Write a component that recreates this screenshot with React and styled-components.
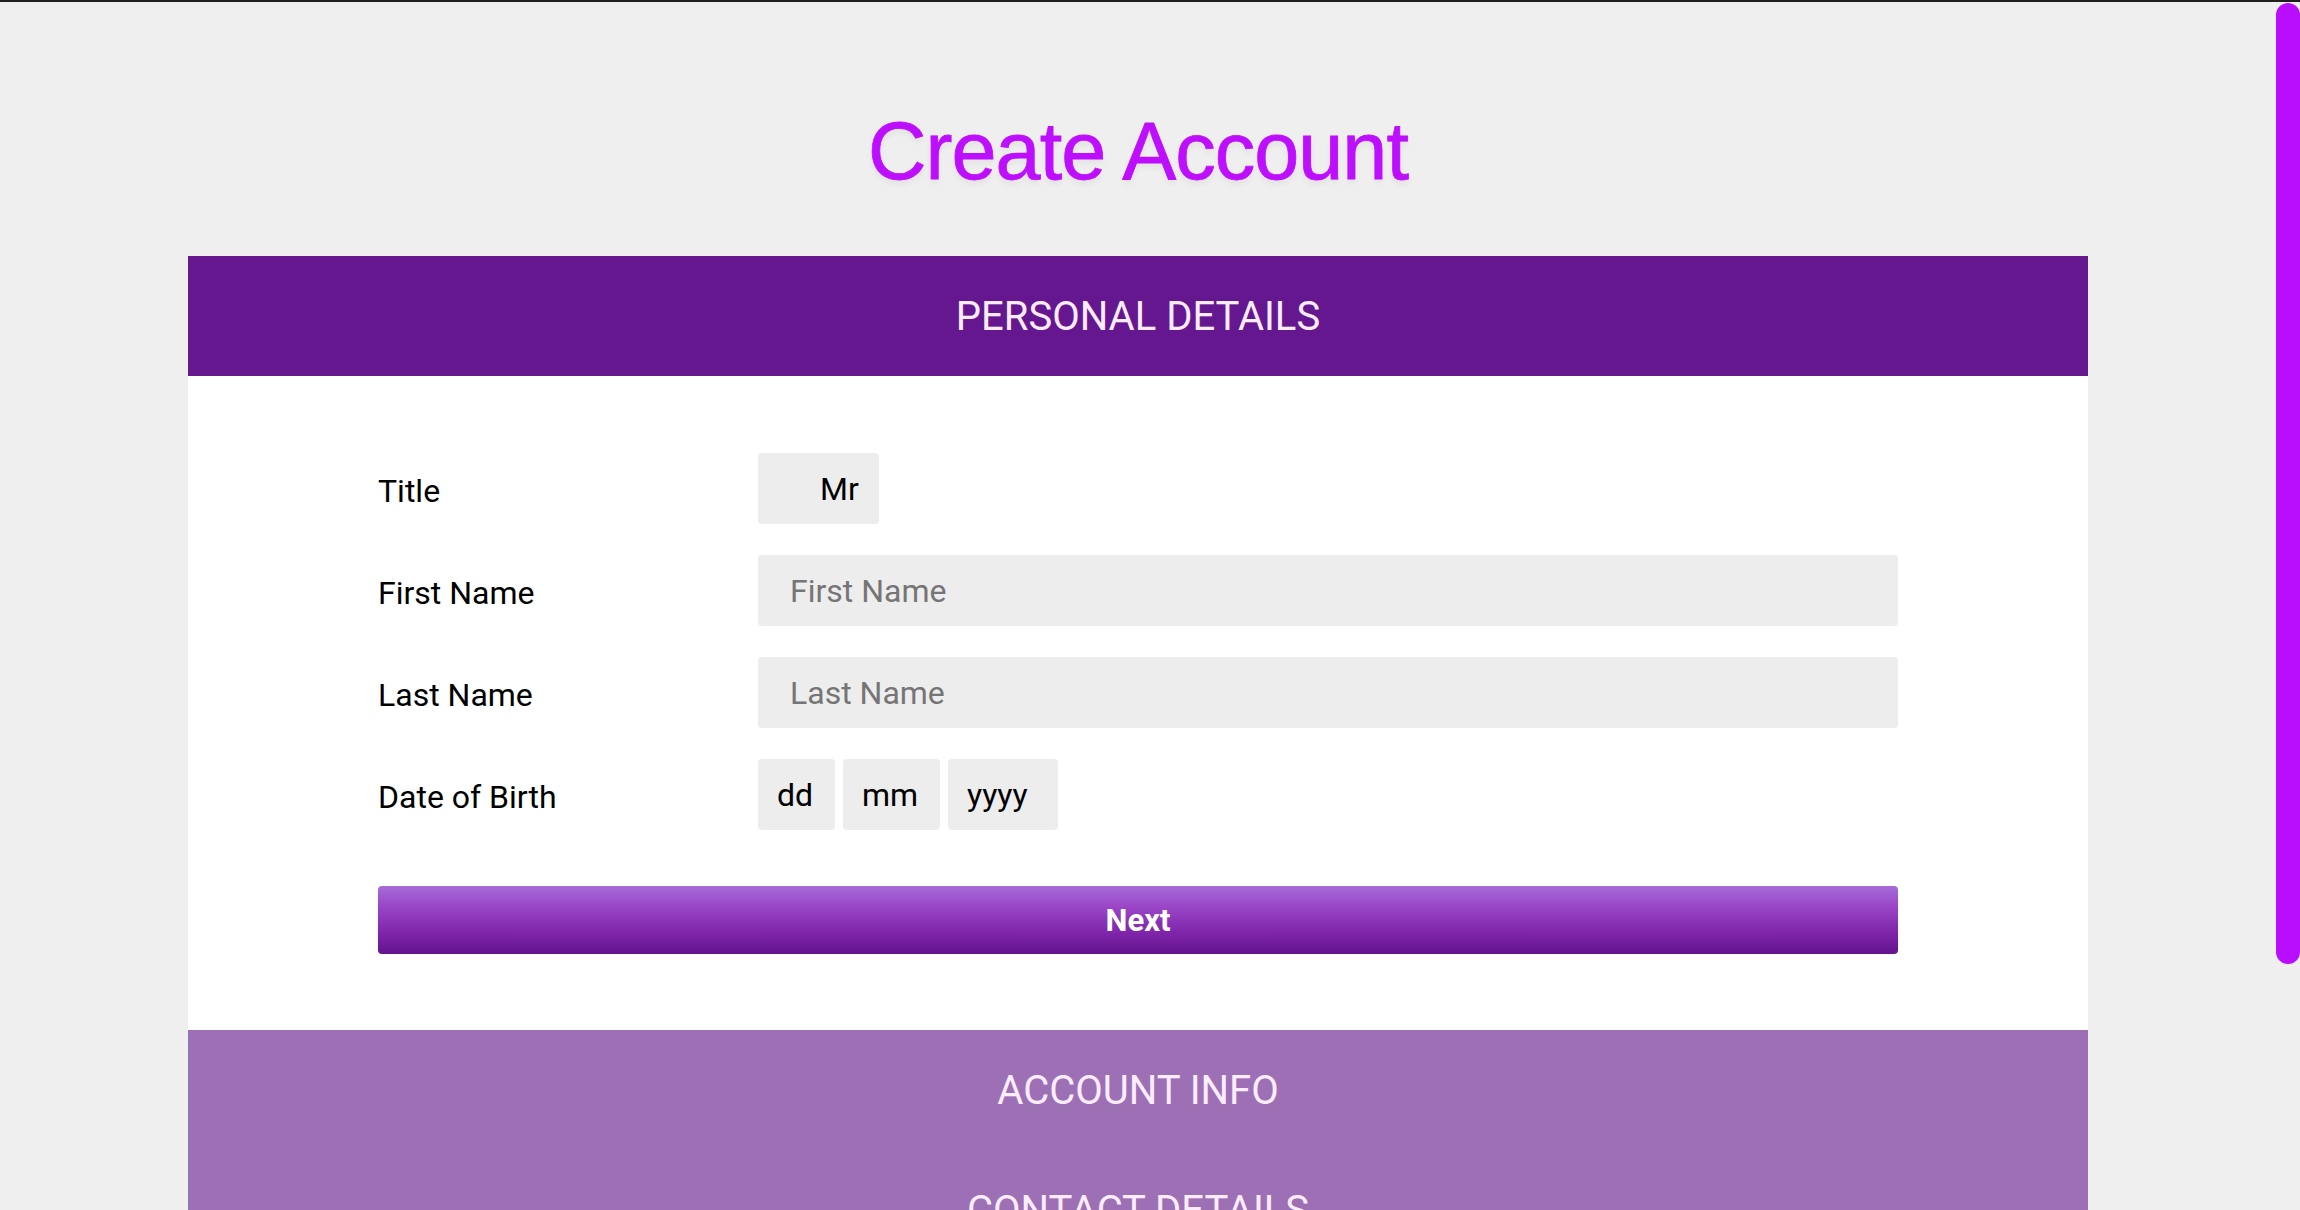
import React from 'react'
import styled, {createGlobalStyle} from 'styled-components'

const GlobalStyle = createGlobalStyle`
html {
    background: #efefef;
    scrollbar-width: none;
}
body {
    margin: 0;
    background: #efefef;
    font-family: Roboto, "Liberation Sans", sans-serif;
}
`;

const sections = ['Account Info', 'Contact Details']

export default function App() {
    return (
        <>
            <GlobalStyle />
            <TopEdge />
            <ScrollTrack>
                <ScrollThumb />
            </ScrollTrack>
            <Page>
                <Title>Create Account</Title>
                <Panel>
                    <SectionHeader $active>Personal Details</SectionHeader>
                    <SectionBody>
                        <Row>
                            <Label htmlFor='title'>Title</Label>
                            <Field>
                                <Picker id='title' $w={121} $pl={62} defaultValue='Mr'>
                                    <option>Mr</option>
                                    <option>Mrs</option>
                                    <option>Ms</option>
                                </Picker>
                            </Field>
                        </Row>
                        <Row>
                            <Label htmlFor='first'>First Name</Label>
                            <TextInput id='first' placeholder='First Name' />
                        </Row>
                        <Row>
                            <Label htmlFor='last'>Last Name</Label>
                            <TextInput id='last' placeholder='Last Name' />
                        </Row>
                        <Row>
                            <Label htmlFor='dob'>Date of Birth</Label>
                            <Field>
                                <Picker id='dob' $w={77}><option>dd</option></Picker>
                                <Picker $w={97}><option>mm</option></Picker>
                                <Picker $w={110} $pr={29}><option>yyyy</option></Picker>
                            </Field>
                        </Row>
                        <NextButton type='button'>Next</NextButton>
                    </SectionBody>
                    {sections.map(s => (
                        <SectionHeader key={s}>{s}</SectionHeader>
                    ))}
                </Panel>
            </Page>
        </>
    )
}

const TopEdge = styled.div`
position: fixed;
top: 0;
left: 0;
right: 0;
height: 2px;
background: #1f1f1f;
z-index: 5;
`;

// the page is scrolled to the top, thumb drawn over the right edge
const ScrollTrack = styled.div`
position: fixed;
top: 0;
right: 0;
bottom: 0;
width: 24px;
padding-top: 3px;
box-sizing: border-box;
background: #efefef;
z-index: 4;
`;

const ScrollThumb = styled.div`
height: 961px;
border-radius: 12px;
background: #b90dfe;
`;

const Page = styled.main`
display: flex;
flex-direction: column;
align-items: center;
padding: 111px 24px 260px 0;
`;

const Title = styled.h1`
margin: 0 0 64px;
font: 400 81px/1 "Liberation Sans", Arial, sans-serif;
letter-spacing: -1px;
color: #bd0efd;
-webkit-text-stroke: 0.8px #bd0efd;
text-shadow: 0 4px 6px rgba(0,0,0,0.06);
`;

const Panel = styled.section`
width: 1900px;
`;

const SectionHeader = styled.h2`
margin: 0;
height: 120px;
display: flex;
align-items: center;
justify-content: center;
background: ${p => p.$active ? '#65178f' : '#9d70b5'};
color: #fcecff;
font: 400 40px Roboto, sans-serif;
text-transform: uppercase;
`;

const SectionBody = styled.div`
background: #fff;
padding: 77px 190px 76px;
`;

const Row = styled.div`
display: grid;
grid-template-columns: 380px 1fr;
align-items: center;
margin-bottom: 31px;
`;

const Label = styled.label`
padding-top: 5px;
font: 400 32px Roboto, sans-serif;
color: #000;
`;

const Field = styled.div`
display: flex;
gap: 8px;
`;

const TextInput = styled.input`
box-sizing: border-box;
width: 100%;
height: 71px;
padding: 0 32px;
border: none;
border-radius: 4px;
background: #ededed;
font: 400 32px Roboto, sans-serif;
color: #111;
outline: none;
&::placeholder {
    color: #757575;
}
`;

const Picker = styled.select`
appearance: none;
box-sizing: border-box;
width: ${p => p.$w}px;
height: 71px;
padding: 0 ${p => p.$pr || 19}px 0 ${p => p.$pl || 19}px;
border: none;
border-radius: 4px;
background: #ededed;
font: 400 32px Roboto, sans-serif;
color: #000;
outline: none;
`;

const NextButton = styled.button`
display: block;
width: 100%;
height: 68px;
margin-top: 56px;
border: none;
border-radius: 4px;
background: linear-gradient(to bottom, #a56cd8 0%, #9a46c7 30%, #7e24aa 70%, #62138c 100%);
color: #fff;
font: 700 31px Roboto, sans-serif;
cursor: pointer;
`;
